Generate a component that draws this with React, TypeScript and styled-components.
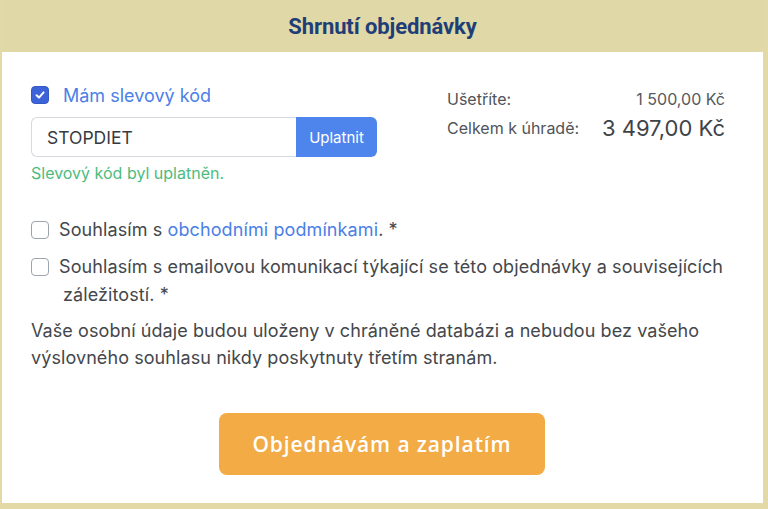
import React from "react";
import styled, { createGlobalStyle } from "styled-components";

const Global = createGlobalStyle`
  html, body { margin: 0; padding: 0; background: #ffffff; }
  body { font-family: Inter, "Noto Sans", sans-serif; -webkit-font-smoothing: antialiased; }
  * { box-sizing: border-box; }
`;

const Card = styled.div`
  width: 768px;
  height: 509px;
  background: #ffffff;
  border-left: 2px solid #e2d9a6;
  border-right: 5px solid #e2d9a6;
  border-bottom: 6px solid #e2d9a6;
  display: flex;
  flex-direction: column;
`;

const Header = styled.div`
  height: 52px;
  background: #e0d8a6;
  display: flex;
  align-items: center;
  justify-content: center;
`;

const Title = styled.h2`
  margin: 0;
  font-family: Roboto, "Liberation Sans", sans-serif;
  font-weight: 700;
  font-size: 22px;
  color: #1f3e78;
  letter-spacing: -0.1px;
`;

const Body = styled.div`
  padding: 33px 36px 0 29px;
  display: flex;
  flex-direction: column;
`;

const Top = styled.div`
  display: flex;
  justify-content: space-between;
  align-items: flex-start;
`;

const Left = styled.div`
  width: 346px;
  display: flex;
  flex-direction: column;
`;

const CheckRow = styled.label`
  display: flex;
  align-items: center;
  gap: 14px;
  height: 20px;
`;

const Box = styled.span<{ $checked?: boolean }>`
  flex: none;
  width: 18px;
  height: 18px;
  border-radius: 4px;
  display: inline-flex;
  align-items: center;
  justify-content: center;
  background: ${(p) => (p.$checked ? "#3c63d8" : "#ffffff")};
  border: 1.5px solid ${(p) => (p.$checked ? "#3558c4" : "#9ea3ab")};
`;

const BlueLabel = styled.span`
  font-size: 18px;
  color: #4b80e6;
`;

const InputGroup = styled.div`
  margin-top: 12px;
  display: flex;
  height: 40px;
`;

const CodeInput = styled.div`
  flex: 1;
  border: 1px solid #d6d9de;
  border-right: none;
  border-radius: 6px 0 0 6px;
  display: flex;
  align-items: center;
  padding-left: 15px;
  font-size: 17.5px;
  color: #363a3f;
`;

const ApplyButton = styled.button`
  width: 81px;
  border: none;
  background: #4e85ec;
  color: #ffffff;
  font-family: Inter, sans-serif;
  font-size: 15px;
  border-radius: 0 6px 6px 0;
  padding: 0;
`;

const Success = styled.div`
  margin-top: 6px;
  font-size: 16px;
  color: #4dbb7d;
`;

const Right = styled.div`
  width: 278px;
  margin-right: 2px;
  padding-top: 2px;
  display: grid;
  grid-template-columns: auto 1fr;
  align-items: center;
  row-gap: 2px;
`;

const SumLabel = styled.span`
  font-size: 16px;
  color: #505459;
`;

const SumValue = styled.span<{ $big?: boolean }>`
  text-align: right;
  font-size: ${(p) => (p.$big ? "22px" : "16px")};
  color: ${(p) => (p.$big ? "#3f4348" : "#55595e")};
  line-height: ${(p) => (p.$big ? "30px" : "24px")};
`;

const Agreements = styled.div`
  margin-top: 38px;
  display: flex;
  flex-direction: column;
  gap: 14px;
`;

const AgreeRow = styled.label`
  display: flex;
  align-items: flex-start;
  gap: 10px;
`;

const AgreeText = styled.span`
  font-size: 18px;
  line-height: 28px;
  letter-spacing: 0.1px;
  color: #44474b;
  margin-top: -5px;
  padding-left: 4px;
  text-indent: -4px;
`;

const Link = styled.a`
  color: #4b80e6;
  text-decoration: none;
`;

const Privacy = styled.p`
  margin: 8px 0 0;
  font-size: 18px;
  line-height: 27px;
  letter-spacing: 0.08px;
  color: #44474b;
`;

const Submit = styled.button`
  align-self: center;
  margin: 42px 0 0 6px;
  width: 326px;
  height: 62px;
  border: none;
  border-radius: 8px;
  background: #f2ab45;
  color: #ffffff;
  font-family: "Open Sans", Lato, sans-serif;
  font-weight: 600;
  font-size: 21px;
  letter-spacing: 0.9px;
`;

const Check = () => (
  <svg width="12" height="12" viewBox="0 0 12 12">
    <path d="M2.5 6.3 L5 8.6 L9.6 3.4" stroke="#fff" strokeWidth="2" fill="none" strokeLinecap="round" strokeLinejoin="round" />
  </svg>
);

export default function App() {
  return (
    <>
      <Global />
      <Card>
        <Header>
          <Title>Shrnutí objednávky</Title>
        </Header>
        <Body>
          <Top>
            <Left>
              <CheckRow>
                <Box $checked>
                  <Check />
                </Box>
                <BlueLabel>Mám slevový kód</BlueLabel>
              </CheckRow>
              <InputGroup>
                <CodeInput>STOPDIET</CodeInput>
                <ApplyButton>Uplatnit</ApplyButton>
              </InputGroup>
              <Success>Slevový kód byl uplatněn.</Success>
            </Left>
            <Right>
              <SumLabel>Ušetříte:</SumLabel>
              <SumValue>1 500,00 Kč</SumValue>
              <SumLabel>Celkem k úhradě:</SumLabel>
              <SumValue $big>3 497,00 Kč</SumValue>
            </Right>
          </Top>
          <Agreements>
            <AgreeRow>
              <Box />
              <AgreeText>
                Souhlasím s <Link>obchodními podmínkami</Link>. *
              </AgreeText>
            </AgreeRow>
            <AgreeRow>
              <Box />
              <AgreeText>
                Souhlasím s emailovou komunikací týkající se této objednávky a souvisejících záležitostí. *
              </AgreeText>
            </AgreeRow>
          </Agreements>
          <Privacy>
            Vaše osobní údaje budou uloženy v chráněné databázi a nebudou bez vašeho výslovného souhlasu nikdy
            poskytnuty třetím stranám.
          </Privacy>
          <Submit>Objednávám a zaplatím</Submit>
        </Body>
      </Card>
    </>
  );
}
